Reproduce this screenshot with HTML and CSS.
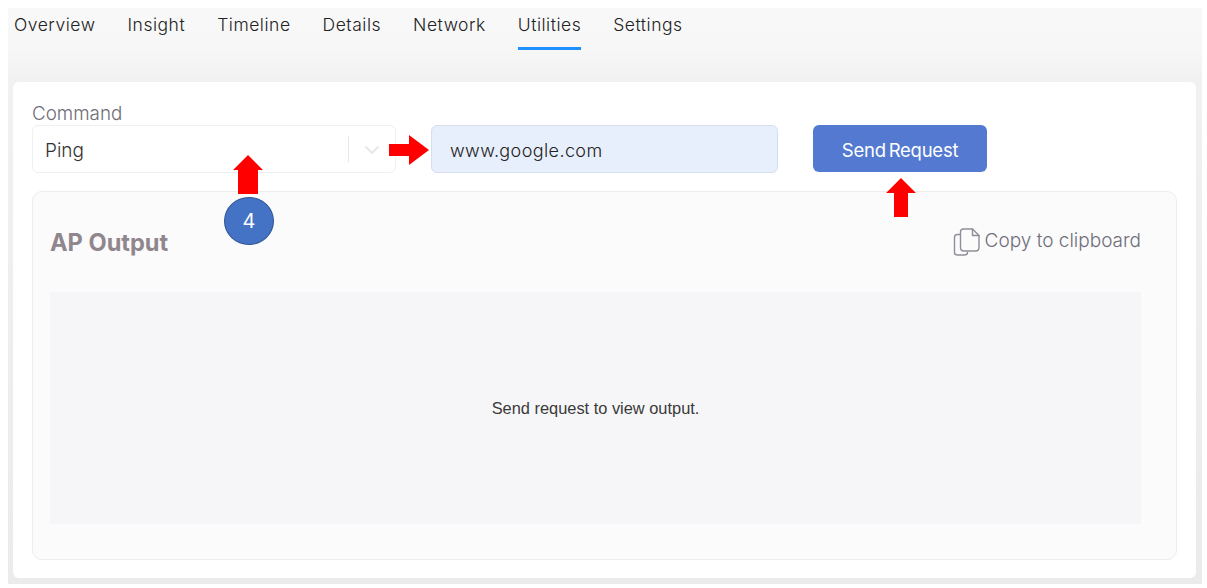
FILE: index.html
```html
<!DOCTYPE html>
<html lang="en">
<head>
<meta charset="utf-8">
<title>Utilities</title>
<link rel="stylesheet" href="styles.css">
</head>
<body>
<div class="frame">
  <nav class="tabs">
    <a class="tab">Overview</a>
    <a class="tab">Insight</a>
    <a class="tab">Timeline</a>
    <a class="tab">Details</a>
    <a class="tab">Network</a>
    <a class="tab active">Utilities</a>
    <a class="tab">Settings</a>
  </nav>
  <main class="card">
    <div class="label">Command</div>
    <div class="controls">
      <div class="select">
        <span class="select-value">Ping</span>
        <span class="select-sep"></span>
        <svg class="chevron" width="16" height="10" viewBox="0 0 16 10"><path d="M1.5 1.5 8 8l6.500-6.500" fill="none" stroke="#e8e8e8" stroke-width="2.200"/></svg>
      </div>
      <div class="input">www.google.com</div>
      <button class="send">Send Request</button>
    </div>
    <section class="panel">
      <header class="panel-head">
        <h2 class="panel-title">AP Output</h2>
        <div class="copy">
          <svg width="28" height="28" viewBox="0 0 28 28" fill="none" stroke="#8f8e9a" stroke-width="1.400" stroke-linejoin="round" stroke-linecap="round">
            <path d="M7 6.500H4.500Q1.500 6.500 1.500 9.500V24.500Q1.500 27 4.500 27H11.500Q14.500 27 14.500 24.500"/>
            <path d="M10.500 1H19.500L26 7.500V19.500Q26 23 22.500 23H11Q7.500 23 7.500 19.500V4Q7.500 1 10.500 1Z"/>
            <path d="M19.500 1V7.500H26"/>
          </svg>
          <span>Copy to clipboard</span>
        </div>
      </header>
      <div class="output">Send request to view output.</div>
    </section>
  </main>
</div>

<svg class="arrow arrow-up-1" width="30" height="40" viewBox="0 0 30 40"><path d="M15 0 30 15H25V39H5V15H0Z" fill="#ff0000"/></svg>
<svg class="arrow arrow-right" width="40" height="30" viewBox="0 0 40 30"><path d="M40 15 20 30V21H0V9H20V0Z" fill="#ff0000"/></svg>
<svg class="arrow arrow-up-2" width="30" height="39" viewBox="0 0 30 39"><path d="M15 0 30 15H22V39H8V15H0Z" fill="#ff0000"/></svg>
<div class="badge">4</div>
</body>
</html>
```

FILE: styles.css
```css
* { box-sizing: border-box; }
html, body { margin: 0; height: 100%; background: #fff; }
body {
  position: relative;
  padding: 8px 5px 4px 8px;
  font-family: Inter, "Liberation Sans", sans-serif;
  overflow: hidden;
}
.frame {
  height: 576px;
  padding: 0 6px 6px 5px;
  display: flex;
  flex-direction: column;
  background: linear-gradient(#f8f8f8 0, #f7f7f7 40px, #f1f1f1 74px, #ebebeb 100%);
}
.tabs { display: flex; gap: 32px; height: 74px; padding-left: 1px; }
.tab {
  height: 42px;
  padding-top: 5px;
  font-size: 17.500px;
  line-height: 24px;
  font-weight: 300;
  color: #222;
  letter-spacing: 0.520px;
  white-space: nowrap;
}
.tab.active { border-bottom: 3px solid #1e90ff; }
.card {
  flex: 1;
  background: #fff;
  border-radius: 6px;
  padding: 20px 19px 18px;
  display: flex;
  flex-direction: column;
}
.label {
  font-size: 18.800px;
  line-height: 23px;
  font-weight: 300;
  color: #6d6d78;
}
.controls { display: flex; align-items: flex-start; }
.select {
  width: 364px;
  height: 48px;
  margin-right: 35px;
  border: 1px solid #f0f0f0;
  border-radius: 6px;
  background: #fff;
  display: flex;
  align-items: center;
  padding-left: 12px;
}
.select-value { flex: 1; padding-top: 2px; font-size: 19px; font-weight: 300; color: #333; }
.select-sep { width: 1px; height: 26px; background: #e6e6e6; }
.chevron { margin: 2px 15px 0 15px; }
.input {
  width: 347px;
  height: 48px;
  margin-right: 35px;
  border: 1px solid #d6deee;
  border-radius: 6px;
  background: #e8effc;
  padding-left: 18px;
  font-size: 18px;
  line-height: 49px;
  font-weight: 300;
  letter-spacing: 0.400px;
  color: #222;
}
.send {
  width: 174px;
  height: 47px;
  padding-top: 3px;
  border: 0;
  border-radius: 6px;
  background: #5379d0;
  color: #fff;
  font: 400 18.500px Inter, "Liberation Sans", sans-serif;
  letter-spacing: -0.250px;
  word-spacing: -2px;
}
.panel {
  flex: 1;
  margin-top: 18px;
  border: 1px solid #ededed;
  border-radius: 10px;
  background: #fbfbfb;
  padding: 0 35px 35px 17px;
  display: flex;
  flex-direction: column;
}
.panel-head {
  height: 100px;
  display: flex;
  justify-content: space-between;
  align-items: flex-start;
}
.panel-title {
  margin: 37px 0 0;
  font-size: 23.600px;
  line-height: 28px;
  font-weight: 700;
  color: #90868d;
}
.copy {
  margin-top: 36px;
  display: flex;
  align-items: flex-start;
  gap: 4px;
  font-size: 19px;
  line-height: 26px;
  font-weight: 300;
  color: #6f6e7a;
}
.output {
  flex: 1;
  background: #f6f6f8;
  display: flex;
  align-items: center;
  justify-content: center;
  font-family: "Liberation Sans", sans-serif;
  font-size: 16.400px;
  color: #3a3a3a;
}
.arrow { position: absolute; }
.arrow-up-1 { left: 233px; top: 155px; }
.arrow-right { left: 389px; top: 135px; }
.arrow-up-2 { left: 886px; top: 178px; }
.badge {
  position: absolute;
  left: 224px;
  top: 197px;
  width: 50px;
  height: 48px;
  border-radius: 50%;
  background: #4472c4;
  border: 1px solid #2f5597;
  color: #fff;
  display: flex;
  align-items: center;
  justify-content: center;
  font-size: 20px;
  font-weight: 400;
}
```
